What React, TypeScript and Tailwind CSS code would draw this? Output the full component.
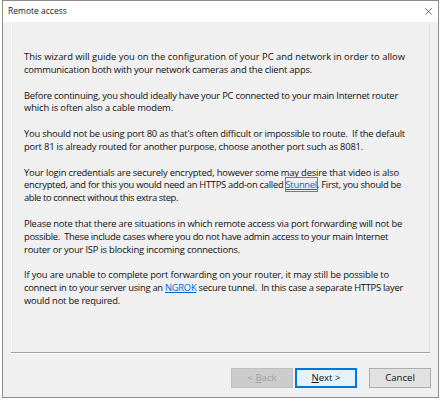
import { useLayoutEffect, useRef, useState } from 'react';

const FONT = "font-['Open_Sans','Noto_Sans',sans-serif]";

type Line = { w: number; text: React.ReactNode };

/** Each line with the width it takes in the original dialog. */
const PARAGRAPHS: Line[][] = [
  [
    { w: 381, text: 'This wizard will guide you on the configuration of your PC and network in order to allow' },
    { w: 288, text: 'communication both with your network cameras and the client apps.' },
  ],
  [
    { w: 374, text: 'Before continuing, you should ideally have your PC connected to your main Internet router' },
    { w: 149, text: 'which is often also a cable modem.' },
  ],
  [
    {
      w: 381,
      text: "You should not be using port 80 as that's often difficult or impossible to route.  If the default",
    },
    { w: 339, text: 'port 81 is already routed for another purpose, choose another port such as 8081.' },
  ],
  [
    { w: 375, text: 'Your login credentials are securely encrypted, however some may desire that video is also' },
    {
      w: 377,
      text: (
        <>
          encrypted, and for this you would need an HTTPS add-on called{' '}
          <a href="#" className="text-[#0066cc] underline outline outline-1 outline-[#5b7fa6]">
            Stunnel
          </a>
          . First, you should be
        </>
      ),
    },
    { w: 154, text: 'able to connect without this extra step.' },
  ],
  [
    { w: 378, text: 'Please note that there are situations in which remote access via port forwarding will not be' },
    { w: 364, text: 'possible.  These include cases where you do not have admin access to your main Internet' },
    { w: 216, text: 'router or your ISP is blocking incoming connections.' },
  ],
  [
    { w: 365, text: 'If you are unable to complete port forwarding on your router, it may still be possible to' },
    {
      w: 379,
      text: (
        <>
          connect in to your server using an{' '}
          <a href="#" className="text-[#0066cc] underline">
            NGROK
          </a>
          {' secure tunnel.  In this case a separate HTTPS layer'}
        </>
      ),
    },
    { w: 96, text: 'would not be required.' },
  ],
];

export default function App() {
  return (
    <div className={`h-[401px] w-[442px] overflow-hidden bg-white pl-[2px] ${FONT}`}>
      <div className="flex h-[398px] w-[437px] flex-col border border-[#8c8c8c] bg-[#f0f0f0]">
        {/* title bar */}
        <div className="flex h-[21px] shrink-0 items-center justify-between bg-white pl-[5px] pr-[6px]">
          <span className="text-[8.5px] text-[#1a1a1a]">Remote access</span>
          <CloseIcon />
        </div>

        {/* wizard page */}
        <div className="mx-[8px] flex-1 border-l border-r border-l-[#fafafa] border-r-[#e2e2e2] pl-[12px] pt-[29px]">
          <div className="flex flex-col gap-[12.85px] text-[9.4px] leading-[12.85px] text-[#111]">
            {PARAGRAPHS.map((lines, i) => (
              <p key={i}>
                {lines.map((line, j) => (
                  <FitLine key={j} width={line.w}>
                    {line.text}
                  </FitLine>
                ))}
              </p>
            ))}
          </div>
        </div>

        {/* separator + buttons */}
        <div className="mx-[8px] h-[2px] border-t border-[#a0a0a0] bg-white" />
        <div className="flex h-[43px] shrink-0 items-start justify-end gap-[2px] pr-[7px] pt-[14px]">
          <WizardButton disabled>
            &lt; <u>B</u>ack
          </WizardButton>
          <WizardButton focused>
            <u>N</u>ext &gt;
          </WizardButton>
          <div className="w-[8px]" />
          <WizardButton>Cancel</WizardButton>
        </div>
      </div>
    </div>
  );
}

/** Spreads or tightens a line's letters so it spans the width it has in the original. */
function FitLine({ width, children }: { width: number; children: React.ReactNode }) {
  const ref = useRef<HTMLSpanElement>(null);
  const [spacing, setSpacing] = useState(0);

  useLayoutEffect(() => {
    const el = ref.current;
    if (!el) return;
    const fit = () => {
      const n = el.textContent?.length || 1;
      const cur = parseFloat(getComputedStyle(el).letterSpacing) || 0;
      const natural = el.getBoundingClientRect().width - n * cur;
      setSpacing((width - natural) / n);
    };
    fit();
    void document.fonts?.ready.then(fit);
  }, [width]);

  return (
    <span ref={ref} className="block w-max whitespace-pre" style={{ letterSpacing: `${spacing}px` }}>
      {children}
    </span>
  );
}

function WizardButton({
  children,
  disabled = false,
  focused = false,
}: {
  children: React.ReactNode;
  disabled?: boolean;
  focused?: boolean;
}) {
  const cls = disabled
    ? 'border-[#bfbfbf] bg-[#cccccc] text-[#a0a0a0]'
    : focused
      ? 'border-[#0078d7] bg-[#e5f1fb] text-[#111] shadow-[inset_0_0_0_1px_#0078d7]'
      : 'border-[#adadad] bg-[#e1e1e1] text-[#111]';
  return (
    <button
      type="button"
      className={`flex h-[20px] w-[62px] items-center justify-center border text-[9.6px] ${cls}`}
    >
      <span>{children}</span>
    </button>
  );
}

function CloseIcon() {
  return (
    <svg viewBox="0 0 10 10" className="h-[7px] w-[7px]" fill="none" aria-hidden="true">
      <path d="M0.5 0.5 9.5 9.5M9.5 0.5 0.5 9.5" stroke="#222" strokeWidth="0.9" />
    </svg>
  );
}
